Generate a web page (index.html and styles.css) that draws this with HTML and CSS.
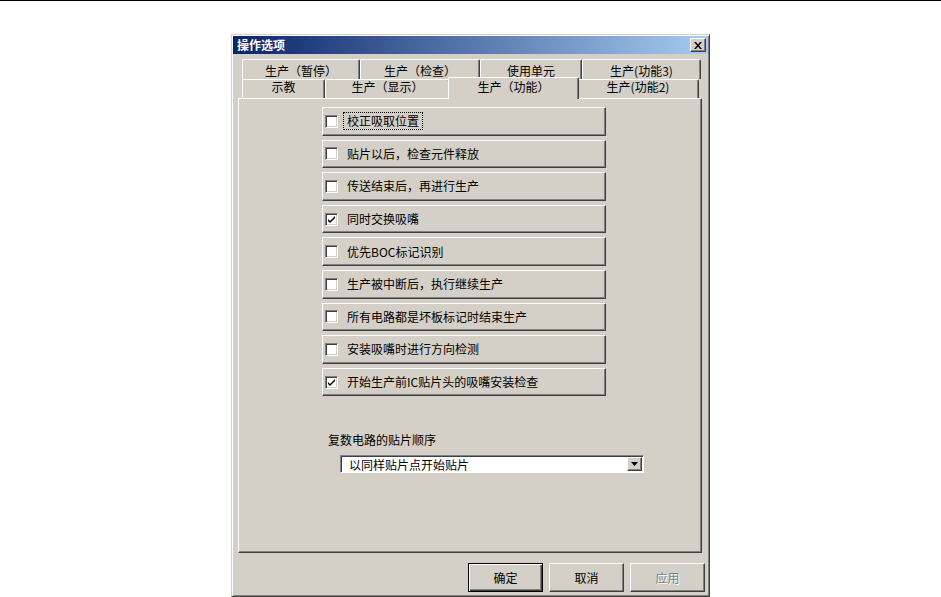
FILE: index.html
```html
<!DOCTYPE html>
<html lang="zh">
<head>
<meta charset="utf-8">
<title>操作选项</title>
<link rel="stylesheet" href="styles.css">
</head>
<body>
<div class="screen">
  <div class="dialog">
    <div class="titlebar">
      <span class="title">操作选项</span>
      <span class="close">
        <svg width="8" height="7" viewBox="0 0 8 7"><path d="M0 0h2l2 2.5L6 0h2L5 3.5 8 7H6L4 4.5 2 7H0l3-3.5z" fill="#000"/></svg>
      </span>
    </div>
    <div class="tabs">
      <div class="tabrow row1">
        <div class="tab w118">生产（暂停）</div>
        <div class="tab w120">生产（检查）</div>
        <div class="tab w102">使用单元</div>
        <div class="tab w119">生产(功能3)</div>
      </div>
      <div class="tabrow row2">
        <div class="tab w83">示教</div>
        <div class="tab w125">生产（显示）</div>
        <div class="tab w127 selected">生产（功能）</div>
        <div class="tab w124">生产(功能2)</div>
      </div>
      <div class="panel">
        <div class="options">
          <div class="opt"><span class="cb"></span><span class="label focus">校正吸取位置</span></div>
          <div class="opt"><span class="cb"></span><span class="label">贴片以后，检查元件释放</span></div>
          <div class="opt"><span class="cb"></span><span class="label">传送结束后，再进行生产</span></div>
          <div class="opt"><span class="cb"><svg width="9" height="9" viewBox="0 0 9 9"><path d="M1 4l2 2 5-5v2L3 8 1 6z" fill="#000"/></svg></span><span class="label">同时交换吸嘴</span></div>
          <div class="opt"><span class="cb"></span><span class="label">优先BOC标记识别</span></div>
          <div class="opt"><span class="cb"></span><span class="label">生产被中断后，执行继续生产</span></div>
          <div class="opt"><span class="cb"></span><span class="label">所有电路都是坏板标记时结束生产</span></div>
          <div class="opt"><span class="cb"></span><span class="label">安装吸嘴时进行方向检测</span></div>
          <div class="opt"><span class="cb"><svg width="9" height="9" viewBox="0 0 9 9"><path d="M1 4l2 2 5-5v2L3 8 1 6z" fill="#000"/></svg></span><span class="label">开始生产前IC贴片头的吸嘴安装检查</span></div>
        </div>
        <div class="combo-label">复数电路的贴片顺序</div>
        <div class="combo">
          <span class="combo-text">以同样贴片点开始贴片</span>
          <span class="combo-btn"><svg width="7" height="4" viewBox="0 0 7 4"><path d="M0 0h7L3.5 4z" fill="#000"/></svg></span>
        </div>
      </div>
    </div>
    <div class="buttons">
      <div class="btn default"><span>确定</span></div>
      <div class="btn"><span>取消</span></div>
      <div class="btn disabled"><span>应用</span></div>
    </div>
  </div>
</div>
</body>
</html>
```
FILE: styles.css
```css
html, body {
  margin: 0;
  padding: 0;
  background: #fff;
}
body {
  font-family: "Noto Sans CJK SC", "Liberation Sans", sans-serif;
  font-size: 12px;
  color: #000;
}
.screen {
  border-top: 1px solid #000;
  height: 596px;
  overflow: hidden;
}
.dialog {
  box-sizing: border-box;
  width: 479px;
  height: 563px;
  margin: 33px 0 0 231px;
  background: #d4d0c8;
  border: 1px solid;
  border-color: #d4d0c8 #404040 #404040 #d4d0c8;
  box-shadow: inset 1px 1px 0 #fff, inset -1px -1px 0 #808080;
  padding: 1px;
  display: flex;
  flex-direction: column;
}
.titlebar {
  height: 18px;
  background: linear-gradient(to right, #0a246a, #a6caf0);
  display: flex;
  align-items: center;
  justify-content: space-between;
  padding: 0 2px 0 4px;
}
.title {
  color: #fff;
  font-weight: bold;
  font-size: 12px;
  line-height: 18px;
}
.close {
  box-sizing: border-box;
  width: 16px;
  height: 14px;
  background: #d4d0c8;
  border: 1px solid;
  border-color: #fff #404040 #404040 #fff;
  box-shadow: inset -1px -1px 0 #808080;
  display: flex;
  align-items: center;
  justify-content: center;
}
.tabs {
  margin: 5px 0 0 5px;
  width: 464px;
}
.tabrow {
  display: flex;
  padding-left: 4px;
}
.row1 { height: 20px; }
.row2 { height: 19px; }
.tab {
  box-sizing: border-box;
  border-top: 1px solid #fff;
  border-left: 1px solid #fff;
  border-right: 1px solid #404040;
  box-shadow: inset -1px 0 0 #808080;
  border-radius: 2px 2px 0 0;
  text-align: center;
  white-space: nowrap;
}
.row1 .tab {
  line-height: 12px;
  padding-top: 5px;
}
.row2 .tab {
  line-height: 14px;
}
.w118 { width: 118px; }
.w120 { width: 120px; }
.w102 { width: 102px; }
.w119 { width: 119px; }
.w83 { width: 83px; }
.w125 { width: 125px; }
.w127 { width: 127px; }
.w124 { width: 124px; }
.row2 .tab.selected {
  position: relative;
  z-index: 1;
  background: #d4d0c8;
  margin: -2px -2px -1px -2px;
  width: 131px;
  height: 22px;
  padding-top: 2px;
  line-height: 14px;
}
.tab.selected + .tab { width: 122px; }
.panel {
  box-sizing: border-box;
  height: 455px;
  border: 1px solid;
  border-color: #fff #404040 #404040 #fff;
  box-shadow: inset -1px -1px 0 #808080;
  padding: 8px 0 0 83px;
}
.options {
  display: flex;
  flex-direction: column;
  gap: 4px;
  width: 284px;
}
.opt {
  box-sizing: border-box;
  height: 28.6px;
  border: 1px solid;
  border-color: #fff #404040 #404040 #fff;
  box-shadow: inset -1px -1px 0 #808080;
  display: flex;
  align-items: center;
  padding-left: 2px;
}
.cb {
  box-sizing: border-box;
  width: 13px;
  height: 13px;
  background: #fff;
  border: 1px solid;
  border-color: #808080 #fff #fff #808080;
  box-shadow: inset 1px 1px 0 #404040, inset -1px -1px 0 #d4d0c8;
  display: flex;
  align-items: center;
  justify-content: center;
  flex: none;
}
.label {
  margin-left: 9px;
  line-height: 16px;
  white-space: nowrap;
}
.label.focus {
  border: 1px dotted #000;
  padding: 0 3px;
  margin-left: 5px;
}
.combo-label {
  margin: 36px 0 0 6px;
  line-height: 16px;
}
.combo {
  box-sizing: border-box;
  width: 304px;
  height: 18px;
  margin: 7px 0 0 18px;
  background: #fff;
  border: 1px solid;
  border-color: #808080 #fff #fff #808080;
  box-shadow: inset 1px 1px 0 #404040;
  display: flex;
  align-items: center;
  justify-content: space-between;
  padding: 1px 1px 0 8px;
}
.combo-text {
  line-height: 15px;
}
.combo-btn {
  box-sizing: border-box;
  width: 15px;
  height: 14px;
  background: #d4d0c8;
  border: 1px solid;
  border-color: #fff #404040 #404040 #fff;
  box-shadow: inset -1px -1px 0 #808080;
  display: flex;
  align-items: center;
  justify-content: center;
  margin-top: -1px;
}
.buttons {
  display: flex;
  justify-content: flex-end;
  gap: 6px;
  margin: 10px 3px 0 0;
}
.btn {
  box-sizing: border-box;
  width: 75px;
  height: 29px;
  border: 1px solid;
  border-color: #fff #404040 #404040 #fff;
  box-shadow: inset -1px -1px 0 #808080;
  display: flex;
  align-items: center;
  justify-content: center;
}
.btn.default {
  border: 1px solid #000;
  box-shadow: inset 1px 1px 0 #fff, inset -1px -1px 0 #404040, inset -2px -2px 0 #808080;
}
.btn.disabled {
  color: #808080;
  text-shadow: 1px 1px 0 #fff;
}
```
